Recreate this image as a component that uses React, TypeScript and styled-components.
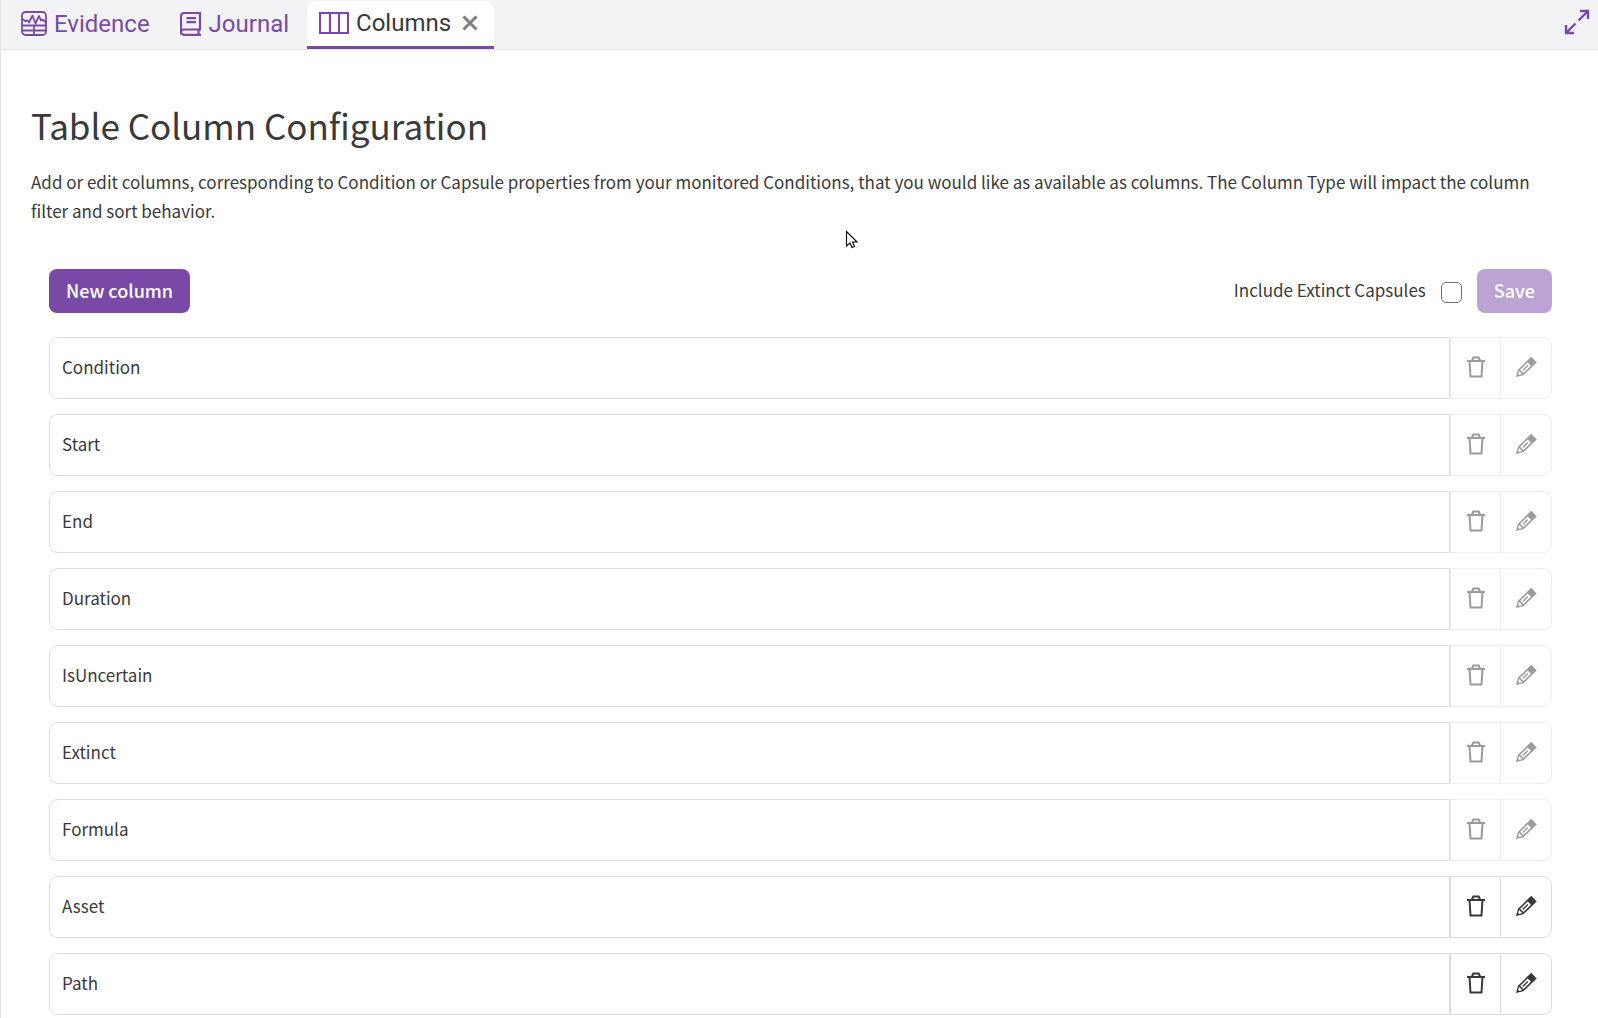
import React from 'react';
import styled, { createGlobalStyle } from 'styled-components';

const bodyFont = '"Noto Sans CJK SC", "Noto Sans", sans-serif';
const tabFont = 'Roboto, "Noto Sans", sans-serif';
const purple = '#7a49a8';
const ink = '#3a3a3a';

const GlobalStyle = createGlobalStyle`
  *, *::before, *::after { box-sizing: border-box; }
  body { margin: 0; background: #fff; color: ${ink}; font-family: ${bodyFont}; font-size: 17px; }
`;

const Page = styled.div`
  min-height: 100vh;
  border-left: 1px solid #e3e4e6;
`;

const TabBar = styled.nav`
  display: flex;
  align-items: stretch;
  height: 50px;
  padding: 1px 8px 0 5px;
  background: #f1f3f5;
  border-bottom: 1px solid #e3e4e6;
`;

const TabItem = styled.div<{ $active?: boolean }>`
  display: flex;
  align-items: center;
  gap: 11px;
  margin-left: ${p => (p.$active ? '3px' : '0')};
  padding: ${p => (p.$active ? '0 16px 2px 12px' : '0 15px')};
  border-bottom: 3px solid ${p => (p.$active ? purple : 'transparent')};
  border-radius: ${p => (p.$active ? '10px 10px 0 0' : '0')};
  background: ${p => (p.$active ? '#fff' : 'transparent')};
`;

const TabButton = styled.button<{ $active?: boolean }>`
  display: flex;
  align-items: center;
  gap: 7px;
  padding: 0;
  border: 0;
  background: none;
  font: 24px/28px ${tabFont};
  color: ${p => (p.$active ? ink : purple)};
  cursor: pointer;
  svg { color: ${purple}; }
`;

const IconButton = styled.button`
  display: flex;
  align-items: center;
  padding: 0;
  border: 0;
  background: none;
  color: ${purple};
  cursor: pointer;
`;

const CloseButton = styled(IconButton)`
  color: #7f7f7f;
`;

const ExpandButton = styled(IconButton)`
  margin-left: auto;
  padding-bottom: 6px;
`;

const Content = styled.main`
  padding: 45px 30px 0;
`;

const Title = styled.h1`
  margin: 0;
  font-size: 35px;
  line-height: 60px;
  font-weight: 400;
`;

const Intro = styled.p`
  margin: 12px 0 0;
  line-height: 29px;
`;

const Panel = styled.section`
  padding: 44px 16px 0 18px;
`;

const Toolbar = styled.div`
  display: flex;
  align-items: center;
  justify-content: space-between;
`;

const SaveGroup = styled.div`
  display: flex;
  align-items: center;
  gap: 15px;
`;

const CheckLabel = styled.label`
  display: flex;
  align-items: center;
  gap: 15px;
  padding-bottom: 2px;
  line-height: 28px;
`;

const Checkbox = styled.input`
  appearance: none;
  width: 21px;
  height: 21px;
  margin: 4px 0 0;
  border: 1px solid #6b7080;
  border-radius: 5px;
  background: #fff;
`;

const PrimaryButton = styled.button`
  height: 44px;
  padding: 0 17px 2px;
  border: 0;
  border-radius: 8px;
  background: ${purple};
  color: #fff;
  font: 500 18px/28px ${bodyFont};
  &:disabled { opacity: 0.5; }
`;

const ColumnList = styled.ul`
  display: flex;
  flex-direction: column;
  gap: 15px;
  margin: 24px 0 0;
  padding: 0;
  list-style: none;
`;

const ColumnRow = styled.li`
  display: flex;
  height: 62px;
`;

const NameField = styled.input`
  flex: 1;
  min-width: 0;
  padding: 0 12px 3px;
  border: 1px solid #dadee2;
  border-radius: 9px 0 0 9px;
  background: #fff;
  color: ${ink};
  font: 17px/28px ${bodyFont};
  outline: none;
`;

const RowButton = styled.button`
  display: flex;
  align-items: center;
  justify-content: center;
  width: 50px;
  padding: 0 0 2px;
  border: 1px solid #dadee2;
  border-right-width: 0;
  background: #fff;
  color: ${ink};
  &:last-child {
    width: 52px;
    border-right-width: 1px;
    border-radius: 0 9px 9px 0;
  }
  &:disabled { opacity: 0.5; }
`;

const Pointer = styled.svg`
  position: absolute;
  left: 845px;
  top: 230px;
  pointer-events: none;
`;

const EvidenceIcon = () => (
  <svg width="26" height="26" viewBox="0 0 26 26" fill="none" stroke="currentColor" strokeWidth="1.8">
    <rect x="1" y="1" width="24" height="23" rx="3.5" />
    <path d="M1 14.500h24M1 19.500h24M13 14.500v10" />
    <path d="M1.500 8l2.500 2 2.500-.5 1.500 2 3.500-7 3 8 3.500-7.500 2 4.500 1.500-1 3.500 3" strokeLinejoin="round" />
  </svg>
);

const JournalIcon = () => (
  <svg width="22" height="24" viewBox="0 0 22 24" fill="none" stroke="currentColor" strokeWidth="2.2">
    <path d="M20 17.500V1H4.500Q1 1 1 4.500V20" />
    <path d="M21 17.500H4Q1 17.500 1 20t3 2.800h17M18.500 17.500v5" />
    <path d="M6.500 6.200h9.500M6.500 10.200h9.500" />
  </svg>
);

const ColumnsIcon = () => (
  <svg width="30" height="22" viewBox="0 0 30 22" fill="none" stroke="currentColor" strokeWidth="2.2">
    <path d="M1 1h28v20H1zM11 1v20M20 1v20" />
  </svg>
);

const CloseIcon = () => (
  <svg width="16" height="16" viewBox="0 0 16 16" fill="none" stroke="currentColor" strokeWidth="3">
    <path d="M1.500 1.500l13 13M14.500 1.500l-13 13" />
  </svg>
);

const ExpandIcon = () => (
  <svg width="26" height="26" viewBox="0 0 26 26" fill="none" stroke="currentColor" strokeWidth="2.4">
    <path d="M16 2h8v8M24 2L14.500 11.500M2 16v8h8M2 24l9.500-9.500" />
  </svg>
);

const TrashIcon = () => (
  <svg width="20" height="22" viewBox="0 0 20 22" fill="none" stroke="currentColor" strokeWidth="2">
    <path d="M1 5h18M6 4.500L7.300 1.500h5.400L14 4.500" />
    <path d="M3.500 5l1 15.500h11l1-15.500" />
  </svg>
);

const PencilIcon = () => (
  <svg width="22" height="22" viewBox="0 0 22 22" fill="currentColor" fillRule="evenodd">
    <path
      transform="translate(1 21) rotate(-44)"
      d="M0 0L6.500-3.900H25V3.900H6.500zM8-2.300V2.300H18.500V-2.300zM9.500-.7H16.500V.7H9.500zM3.800-.8L6.500-2.200V2.200L3.800 .8z"
    />
  </svg>
);

const columns = [
  { name: 'Condition', locked: true },
  { name: 'Start', locked: true },
  { name: 'End', locked: true },
  { name: 'Duration', locked: true },
  { name: 'IsUncertain', locked: true },
  { name: 'Extinct', locked: true },
  { name: 'Formula', locked: true },
  { name: 'Asset', locked: false },
  { name: 'Path', locked: false },
];

export default function App() {
  return (
    <>
      <GlobalStyle />
      <Page>
        <TabBar>
          <TabItem><TabButton><EvidenceIcon />Evidence</TabButton></TabItem>
          <TabItem><TabButton><JournalIcon />Journal</TabButton></TabItem>
          <TabItem $active>
            <TabButton $active><ColumnsIcon />Columns</TabButton>
            <CloseButton aria-label="Close tab"><CloseIcon /></CloseButton>
          </TabItem>
          <ExpandButton aria-label="Expand"><ExpandIcon /></ExpandButton>
        </TabBar>
        <Content>
          <Title>Table Column Configuration</Title>
          <Intro>
            Add or edit columns, corresponding to Condition or Capsule properties from your monitored
            Conditions, that you would like as available as columns. The Column Type will impact the
            column filter and sort behavior.
          </Intro>
          <Panel>
            <Toolbar>
              <PrimaryButton>New column</PrimaryButton>
              <SaveGroup>
                <CheckLabel>
                  Include Extinct Capsules
                  <Checkbox type="checkbox" />
                </CheckLabel>
                <PrimaryButton disabled>Save</PrimaryButton>
              </SaveGroup>
            </Toolbar>
            <ColumnList>
              {columns.map(({ name, locked }) => (
                <ColumnRow key={name}>
                  <NameField readOnly value={name} aria-label={`${name} column`} />
                  <RowButton disabled={locked} aria-label={`Delete ${name}`}><TrashIcon /></RowButton>
                  <RowButton disabled={locked} aria-label={`Edit ${name}`}><PencilIcon /></RowButton>
                </ColumnRow>
              ))}
            </ColumnList>
          </Panel>
        </Content>
        <Pointer width="14" height="19" viewBox="0 0 14 19" fill="#fff" stroke="#111" strokeWidth="1.200" aria-hidden="true">
          <path d="M1.500 1.500v14.500l3.500-3 2 4.500 2.500-1-2-4.500h4.500z" />
        </Pointer>
      </Page>
    </>
  );
}
